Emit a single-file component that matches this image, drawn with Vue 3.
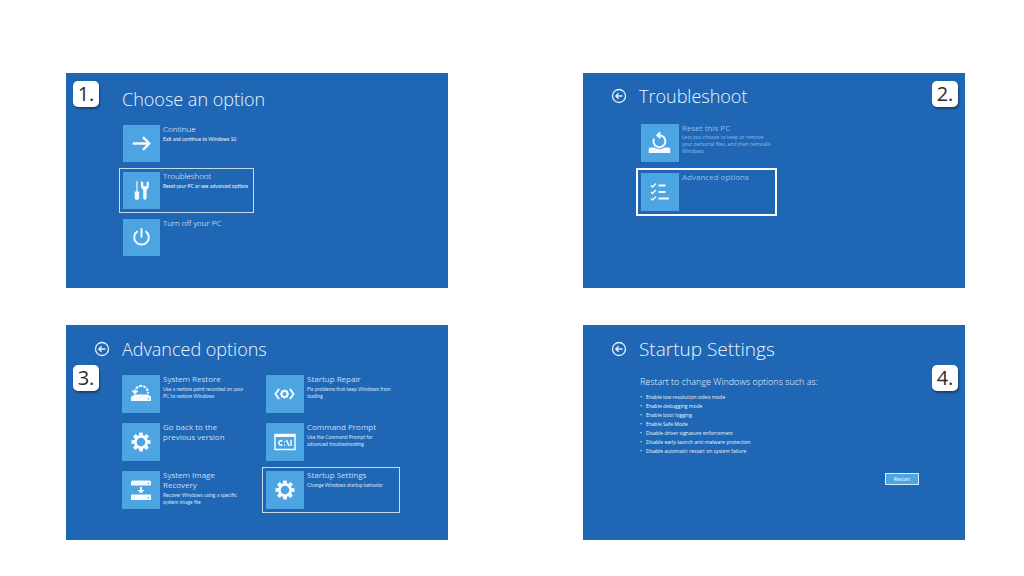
<script setup>
const choose = [
  { icon: 'arrow', title: 'Continue', lines: ['Exit and continue to Windows 10'] },
  { icon: 'tools', title: 'Troubleshoot', lines: ['Reset your PC or see advanced options'], selected: true },
  { icon: 'power', title: 'Turn off your PC', lines: [] }
]
const troubleshoot = [
  {
    icon: 'reset',
    title: 'Reset this PC',
    lines: ['Lets you choose to keep or remove', 'your personal files, and then reinstalls', 'Windows.']
  },
  { icon: 'checklist', title: 'Advanced options', lines: [], selected: true }
]
const advanced = [
  { icon: 'restore', title: 'System Restore', lines: ['Use a restore point recorded on your', 'PC to restore Windows'] },
  { icon: 'repair', title: 'Startup Repair', lines: ['Fix problems that keep Windows from', 'loading'] },
  { icon: 'gear', title: 'Go back to the previous version', lines: [] },
  { icon: 'prompt', title: 'Command Prompt', lines: ['Use the Command Prompt for', 'advanced troubleshooting'] },
  { icon: 'image', title: 'System Image Recovery', lines: ['Recover Windows using a specific', 'system image file'] },
  { icon: 'gear', title: 'Startup Settings', lines: ['Change Windows startup behavior'], selected: true }
]
const panels = [
  { key: 'choose', number: '1.', title: 'Choose an option', options: choose },
  { key: 'trouble', number: '2.', title: 'Troubleshoot', back: true, options: troubleshoot },
  { key: 'advanced', number: '3.', title: 'Advanced options', back: true, options: advanced },
  { key: 'startup', number: '4.', title: 'Startup Settings', back: true }
]
const changes = [
  'Enable low-resolution video mode',
  'Enable debugging mode',
  'Enable boot logging',
  'Enable Safe Mode',
  'Disable driver signature enforcement',
  'Disable early-launch anti-malware protection',
  'Disable automatic restart on system failure'
]
const teeth = [0, 45, 90, 135, 180, 225, 270, 315]
</script>

<template>
  <main class="page">
    <section v-for="p in panels" :key="p.key" class="panel" :class="p.key">
      <span class="badge">{{ p.number }}</span>
      <header class="head">
        <button v-if="p.back" class="back" type="button" aria-label="Back">
          <svg viewBox="0 0 16 16">
            <circle cx="8" cy="8" r="6.5" />
            <path d="M11.5 8H5M7.6 5.2L4.8 8l2.8 2.8" />
          </svg>
        </button>
        <h2>{{ p.title }}</h2>
      </header>

      <div v-if="p.options" class="options">
        <button v-for="o in p.options" :key="o.title" type="button" class="option" :class="{ selected: o.selected }">
          <span class="tile">
            <svg viewBox="0 0 38 38">
              <path v-if="o.icon === 'arrow'" class="line bold" d="M10 19h17M20.5 12.5L27 19l-6.5 6.5" />
              <g v-else-if="o.icon === 'tools'">
                <path class="fill" d="M13.700 9.500h1.200v10.500h1.700v7q0 1.500-1.500 1.500h-1.600q-1.500 0-1.500-1.500v-7h1.700z" />
                <path class="fill" d="M18.500 9.500v5q0 3 2.300 4.200v8q0 1.800 1.700 1.800t1.700-1.800v-8Q26.500 17.500 26.500 14.500v-5l-2.300 1v4.200h-3.400v-4.200z" />
              </g>
              <path v-else-if="o.icon === 'power'" class="line" d="M19 9.500v9.500M15 12.400a7.500 7.500 0 1 0 8 0" />
              <g v-else-if="o.icon === 'reset'">
                <path class="fill" d="M8.500 23.500h5q2.200 1.700 5 1.700t5-1.700h5l.8 1.500v4H7.700v-4z" />
                <path class="line" d="M16.500 11.200h2a6 6 0 1 1-5.500 3.400M19.300 8.300l-3 2.900 3 2.900" />
              </g>
              <g v-else-if="o.icon === 'checklist'">
                <path class="line thin" d="M10 12.500l1.500 1.500 3.500-3.500M10 19l1.500 1.500 3.500-3.500M10 25.500l1.500 1.500 3.500-3.500" />
                <path class="line" d="M17.500 12.500h7M17.500 19h7M17.500 25.500h10.500" />
              </g>
              <g v-else-if="o.icon === 'restore'">
                <path class="line dashed" d="M13 17.500c0-9 13-9 13 1" />
                <path class="line thin" d="M10.300 15.500l2.700 3 2.700-3" />
                <path class="fill" d="M12 19.500h14.500l2.500 2.500H9.500z" />
                <rect class="fill" x="9" y="21.500" width="20" height="4.500" rx=".5" />
                <circle class="dot" cx="26.500" cy="23.800" r=".7" />
              </g>
              <g v-else-if="o.icon === 'repair'">
                <path class="line" d="M13 14L9.500 19l3.500 5M24 14l3.500 5-3.500 5" />
                <circle class="line" cx="18.500" cy="19" r="3" />
                <path class="line thin" d="M18.500 14.500V16M18.500 22v1.500M14 19h1.500M21.500 19H23M15.300 15.800l1 1M20.700 21.200l1 1M21.700 15.800l-1 1M16.300 21.200l-1 1" />
              </g>
              <g v-else-if="o.icon === 'gear'">
                <circle class="line ring" cx="19" cy="19" r="5.600" />
                <path
                  v-for="t in teeth"
                  :key="t"
                  class="fill"
                  d="M17.300 9.500h3.400l.4 3.500h-4.200z"
                  :transform="`rotate(${t} 19 19)`"
                />
              </g>
              <g v-else-if="o.icon === 'prompt'">
                <rect class="line thin" x="9" y="11.500" width="20" height="15" />
                <path class="fill" d="M9 11h20v3H9z" />
                <path class="line thin" d="M16.300 18.200a2.200 2.200 0 1 0 0 3.500M20.500 17l2.500 6M25 17v6" />
                <path class="fill" d="M18 18h1.200v1.200H18zM18 21.500h1.200v1.200H18z" />
              </g>
              <g v-else>
                <path class="fill" d="M10 9.500h18l1 1.200v3.800H9v-3.800zM9 23.500h20v5.500H9zM18 16h2v3h2.500L19 22.500 15.500 19H18z" />
                <circle class="dot" cx="26.500" cy="12.500" r=".7" />
                <circle class="dot" cx="26.500" cy="26.800" r=".7" />
              </g>
            </svg>
          </span>
          <span class="copy">
            <span class="title">{{ o.title }}</span>
            <span v-for="l in o.lines" :key="l" class="line-text">{{ l }}</span>
          </span>
        </button>
      </div>

      <div v-else class="restart">
        <h3>Restart to change Windows options such as:</h3>
        <ul>
          <li v-for="c in changes" :key="c">{{ c }}</li>
        </ul>
        <button class="go" type="button">Restart</button>
      </div>
    </section>
  </main>
</template>

<style>
body {
  margin: 0;
  background: #fff;
}
</style>

<style scoped>
.page {
  box-sizing: border-box;
  min-height: 100vh;
  padding: 73px 59px 36px 66px;
  display: grid;
  grid-template-columns: 1fr 1fr;
  grid-auto-rows: minmax(215px, auto);
  align-content: start;
  gap: 37px 135px;
  font-family: "Open Sans", "Noto Sans", sans-serif;
  color: #eef6fd;
}
.panel {
  position: relative;
  box-sizing: border-box;
  background: #1f67b5;
}
.badge {
  position: absolute;
  top: 8px;
  left: 7px;
  width: 26px;
  height: 26px;
  border-radius: 5px;
  background: #fff;
  box-shadow: 1px 2px 2px rgba(20, 40, 70, 0.6);
  color: #2b2b2b;
  font-size: 20px;
  line-height: 26px;
  text-align: center;
}
.trouble .badge,
.startup .badge {
  left: auto;
  right: 7px;
}
.advanced .badge,
.startup .badge {
  top: 40px;
}
.head {
  display: flex;
  align-items: center;
  box-sizing: border-box;
  height: 48px;
  padding-left: 28px;
}
.choose .head {
  padding: 4px 0 0 56px;
}
h2 {
  margin: 0;
  font-size: 18px;
  line-height: 24px;
  font-weight: 300;
}
.startup h2 {
  font-size: 19px;
}
.back {
  width: 16px;
  height: 16px;
  margin-right: 12px;
  padding: 0;
  border: 0;
  background: none;
}
.back svg,
.tile svg {
  display: block;
  width: 100%;
  height: 100%;
}
.back svg {
  fill: none;
  stroke: #e4f0fb;
  stroke-width: 1.3;
}
.options {
  display: grid;
  grid-template-columns: 135px;
  gap: 2px;
  padding-left: 53px;
}
.trouble .options {
  grid-template-columns: 141px;
  gap: 1px;
}
.advanced .options {
  grid-template-columns: 138px 138px;
  gap: 2px 6px;
  padding-left: 52px;
}
.trouble .head,
.advanced .head {
  height: 46px;
}
.option {
  display: flex;
  align-items: flex-start;
  gap: 3px;
  padding: 3px;
  border: 1px solid transparent;
  background: none;
  color: inherit;
  font: inherit;
  text-align: left;
}
.option.selected {
  border-color: #c9dcee;
}
.trouble .option {
  border-width: 2px;
}
.trouble .option.selected {
  border-color: #fff;
}
.advanced .head {
  padding-top: 2px;
}
.tile {
  flex: none;
  width: 37px;
  height: 37px;
  background: #4ca5e0;
}
.trouble .tile,
.advanced .tile {
  width: 38px;
  height: 38px;
}
.fill {
  fill: #f4faff;
}
.dot {
  fill: #4ca5e0;
}
.line {
  fill: none;
  stroke: #f4faff;
  stroke-width: 2;
}
.bold {
  stroke-width: 2.4;
}
.thin {
  stroke-width: 1.5;
}
.ring {
  stroke-width: 2.6;
}
.dashed {
  stroke-dasharray: 3 1;
}
.copy {
  min-width: 0;
  margin-top: -1px;
}
.title,
.line-text {
  display: block;
}
.title {
  margin-bottom: 2px;
  font-size: 8px;
  line-height: 10px;
  font-weight: 400;
  color: #c8dff4;
}
.choose .title {
  font-weight: 300;
  color: #fff;
}
.advanced .title {
  max-width: 80px;
}
.line-text {
  font-family: Lato, "Open Sans", sans-serif;
  font-size: 5px;
  line-height: 7px;
  white-space: nowrap;
}
.advanced .line-text {
  color: #d2e4f5;
}
.trouble .copy,
.trouble .title {
  color: #93bde8;
}
.trouble .title {
  margin-bottom: 1px;
}
.trouble .line-text {
  font-family: "Open Sans", sans-serif;
}
.restart {
  padding: 3px 46px 0 57px;
}
h3 {
  margin: 0;
  font-size: 9px;
  line-height: 12px;
  font-weight: 300;
}
ul {
  margin: 5px 0 0;
  padding: 0;
  list-style: none;
}
li {
  display: flex;
  font-size: 5px;
  line-height: 9px;
}
li::before {
  content: "•";
  width: 6px;
}
.go {
  display: block;
  width: 34px;
  height: 12px;
  margin: 17px 0 0 auto;
  padding: 0;
  border: 1px solid #d5eafa;
  background: #4ca5e0;
  color: #fff;
  font: inherit;
  font-size: 5px;
  line-height: 10px;
}
</style>
